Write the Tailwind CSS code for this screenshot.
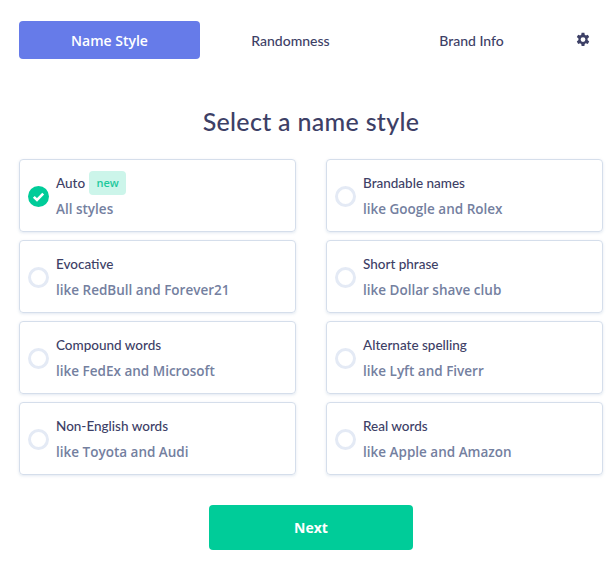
<!DOCTYPE html>
<html lang="en">
<head>
    <meta charset="UTF-8">
    <meta name="viewport" content="width=device-width, initial-scale=1.0">
    <title>Select a name style</title>
    <script src="https://cdn.jsdelivr.net/npm/@tailwindcss/browser@4"></script>
</head>
<body class="bg-white font-['Open_Sans',sans-serif] w-[612px] h-[572px] overflow-hidden">
    <div class="pt-[21px] pl-[19px] pr-[9px]">
        <!-- Tabs -->
        <nav class="flex items-center h-[38px] text-[14px]">
            <a class="w-[181px] h-full flex items-center justify-center rounded bg-[#667be9] text-white font-semibold">Name Style</a>
            <a class="w-[181px] h-full flex items-center justify-center text-[#3d4066] font-['Lato',sans-serif] font-medium">Randomness</a>
            <a class="w-[181px] h-full flex items-center justify-center text-[#3d4066] font-['Lato',sans-serif] font-medium">Brand Info</a>
            <span class="flex-1 flex justify-center">
                <svg class="w-[16px] h-[16px] fill-[#3d4066]" viewBox="0 0 24 24"><path fill-rule="evenodd" d="M14.1 1h-4.2l-.5 3.1c-.6.3-1.2.6-1.7 1L4.8 4 2.7 7.6l2.5 2c-.1.8-.1 1.6 0 2.4l-2.5 2.4L4.8 18l2.9-1.1c.5.4 1.100.8 1.700 1l.5 3.100h4.200l.5-3.100c.6-.3 1.200-.6 1.700-1l2.900 1.100 2.100-3.600-2.500-2.400c.1-.8.1-1.600 0-2.400l2.500-2L19.200 4l-2.900 1.100c-.5-.4-1.100-.7-1.700-1zM12 7.800a3.600 3.600 0 1 1 0 7.200 3.600 3.600 0 0 1 0-7.200z"/></svg>
            </span>
        </nav>

        <h1 class="mt-[44px] h-[38px] flex items-center justify-center text-[25px] font-medium tracking-[0.3px] text-[#3d4066] font-['Lato',sans-serif]">Select a name style</h1>

        <!-- Name style options -->
        <div class="mt-[18px] grid grid-cols-[277px_277px] gap-x-[30px] gap-y-[8px] text-[13.5px]">
            <label class="h-[73px] flex items-center gap-[7px] pl-[8px] border border-[#d5deeb] rounded shadow-[0_1px_3px_rgba(190,205,225,0.45)]">
                <svg class="w-[21px] h-[21px] shrink-0 mt-[1px]" viewBox="0 0 21 21"><circle cx="10.500" cy="10.500" r="10.500" fill="#00cc99"/><path d="M5.800 10.800l3.200 3.200 6.200-6.400" fill="none" stroke="#fff" stroke-width="2.600"/></svg>
                <span>
                    <span class="flex items-center h-[24px] text-[#3d4066] font-['Lato',sans-serif] font-medium">Auto<span class="ml-[4px] w-[37px] h-[24px] flex items-center justify-center rounded bg-[#ccf5ea] text-[#1ec99d] text-[11px] font-semibold font-['Open_Sans',sans-serif]">new</span></span>
                    <span class="block mt-[4px] text-[#74809f] font-semibold">All styles</span>
                </span>
            </label>
            <label class="h-[73px] flex items-center gap-[7px] pl-[8px] border border-[#d5deeb] rounded shadow-[0_1px_3px_rgba(190,205,225,0.45)]">
                <span class="w-[21px] h-[21px] shrink-0 mt-[1px] rounded-full border-[3px] border-[#e4eaf5]"></span>
                <span>
                    <span class="flex items-center h-[24px] text-[#3d4066] font-['Lato',sans-serif] font-medium">Brandable names</span>
                    <span class="block mt-[4px] text-[#74809f] font-semibold">like Google and Rolex</span>
                </span>
            </label>
            <label class="h-[73px] flex items-center gap-[7px] pl-[8px] border border-[#d5deeb] rounded shadow-[0_1px_3px_rgba(190,205,225,0.45)]">
                <span class="w-[21px] h-[21px] shrink-0 mt-[1px] rounded-full border-[3px] border-[#e4eaf5]"></span>
                <span>
                    <span class="flex items-center h-[24px] text-[#3d4066] font-['Lato',sans-serif] font-medium">Evocative</span>
                    <span class="block mt-[4px] text-[#74809f] font-semibold">like RedBull and Forever21</span>
                </span>
            </label>
            <label class="h-[73px] flex items-center gap-[7px] pl-[8px] border border-[#d5deeb] rounded shadow-[0_1px_3px_rgba(190,205,225,0.45)]">
                <span class="w-[21px] h-[21px] shrink-0 mt-[1px] rounded-full border-[3px] border-[#e4eaf5]"></span>
                <span>
                    <span class="flex items-center h-[24px] text-[#3d4066] font-['Lato',sans-serif] font-medium">Short phrase</span>
                    <span class="block mt-[4px] text-[#74809f] font-semibold">like Dollar shave club</span>
                </span>
            </label>
            <label class="h-[73px] flex items-center gap-[7px] pl-[8px] border border-[#d5deeb] rounded shadow-[0_1px_3px_rgba(190,205,225,0.45)]">
                <span class="w-[21px] h-[21px] shrink-0 mt-[1px] rounded-full border-[3px] border-[#e4eaf5]"></span>
                <span>
                    <span class="flex items-center h-[24px] text-[#3d4066] font-['Lato',sans-serif] font-medium">Compound words</span>
                    <span class="block mt-[4px] text-[#74809f] font-semibold">like FedEx and Microsoft</span>
                </span>
            </label>
            <label class="h-[73px] flex items-center gap-[7px] pl-[8px] border border-[#d5deeb] rounded shadow-[0_1px_3px_rgba(190,205,225,0.45)]">
                <span class="w-[21px] h-[21px] shrink-0 mt-[1px] rounded-full border-[3px] border-[#e4eaf5]"></span>
                <span>
                    <span class="flex items-center h-[24px] text-[#3d4066] font-['Lato',sans-serif] font-medium">Alternate spelling</span>
                    <span class="block mt-[4px] text-[#74809f] font-semibold">like Lyft and Fiverr</span>
                </span>
            </label>
            <label class="h-[73px] flex items-center gap-[7px] pl-[8px] border border-[#d5deeb] rounded shadow-[0_1px_3px_rgba(190,205,225,0.45)]">
                <span class="w-[21px] h-[21px] shrink-0 mt-[1px] rounded-full border-[3px] border-[#e4eaf5]"></span>
                <span>
                    <span class="flex items-center h-[24px] text-[#3d4066] font-['Lato',sans-serif] font-medium">Non-English words</span>
                    <span class="block mt-[4px] text-[#74809f] font-semibold">like Toyota and Audi</span>
                </span>
            </label>
            <label class="h-[73px] flex items-center gap-[7px] pl-[8px] border border-[#d5deeb] rounded shadow-[0_1px_3px_rgba(190,205,225,0.45)]">
                <span class="w-[21px] h-[21px] shrink-0 mt-[1px] rounded-full border-[3px] border-[#e4eaf5]"></span>
                <span>
                    <span class="flex items-center h-[24px] text-[#3d4066] font-['Lato',sans-serif] font-medium">Real words</span>
                    <span class="block mt-[4px] text-[#74809f] font-semibold">like Apple and Amazon</span>
                </span>
            </label>
        </div>

        <div class="mt-[30px] ml-[190px]">
            <button class="w-[204px] h-[45px] rounded bg-[#00cc99] text-white text-[14px] font-bold">Next</button>
        </div>
    </div>
</body>
</html>
